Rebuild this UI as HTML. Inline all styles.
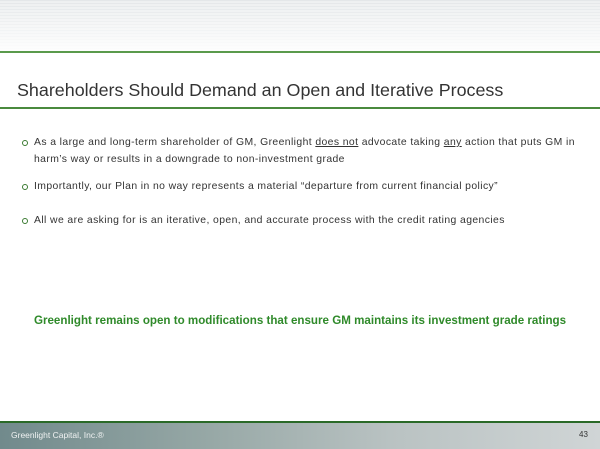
<!DOCTYPE html>
<html><head><style>
body{margin:0;width:600px;height:449px;position:relative;background:#fff;font-family:"Liberation Sans",sans-serif;overflow:hidden}
.hdr{position:absolute;left:0;top:0;width:600px;height:51px;background:repeating-linear-gradient(#e4e7e9 0 1px,#eef0f1 1px 3px);}
.hdr:after{content:"";position:absolute;inset:0;background:linear-gradient(rgba(255,255,255,0),rgba(255,255,255,.9))}
.l1{position:absolute;left:0;top:51px;width:600px;height:2px;background:#5a9a4c}
.title{position:absolute;left:17px;top:80px;font-size:17.9px;color:#333;white-space:nowrap}
.l2{position:absolute;left:0;top:107px;width:600px;height:2px;background:#4a8a3e}
.b{position:absolute;left:22px;font-size:10.4px;letter-spacing:0.4px;color:#333;line-height:17px;width:562px}
.b:before{content:"";position:absolute;left:0;top:6px;width:4px;height:4px;border:1.2px solid #3a7a30;border-radius:50%}
.b span{display:block;padding-left:12px}
u{text-decoration:underline}
.green{position:absolute;left:0;width:600px;top:314px;text-align:center;font-weight:bold;color:#2f8a2a;font-size:11.6px}
.l3{position:absolute;left:0;top:421px;width:600px;height:2px;background:#2a6a28}
.ftr{position:absolute;left:0;top:423px;width:600px;height:26px;background:linear-gradient(90deg,#718a8c,#97a8a6 35%,#b9c2c2 65%,#d0d5d6)}
.ftr .t{position:absolute;left:11px;top:7px;font-size:8.5px;color:#f0f2f2}
.ftr .n{position:absolute;left:579px;top:7px;font-size:8px;color:#333}
</style></head><body>
<div class="hdr"></div><div class="l1"></div>
<div class="title">Shareholders Should Demand an Open and Iterative Process</div>
<div class="l2"></div>
<div class="b" style="top:134px"><span>As a large and long-term shareholder of GM, Greenlight <u>does not</u> advocate taking <u>any</u> action that puts GM in harm’s way or results in a downgrade to non-investment grade</span></div>
<div class="b" style="top:178px"><span>Importantly, our Plan in no way represents a material “departure from current financial policy”</span></div>
<div class="b" style="top:212px"><span>All we are asking for is an iterative, open, and accurate process with the credit rating agencies</span></div>
<div class="green">Greenlight remains open to modifications that ensure GM maintains its investment grade ratings</div>
<div class="l3"></div>
<div class="ftr"><div class="t">Greenlight Capital, Inc.®</div><div class="n">43</div></div>
</body></html>
